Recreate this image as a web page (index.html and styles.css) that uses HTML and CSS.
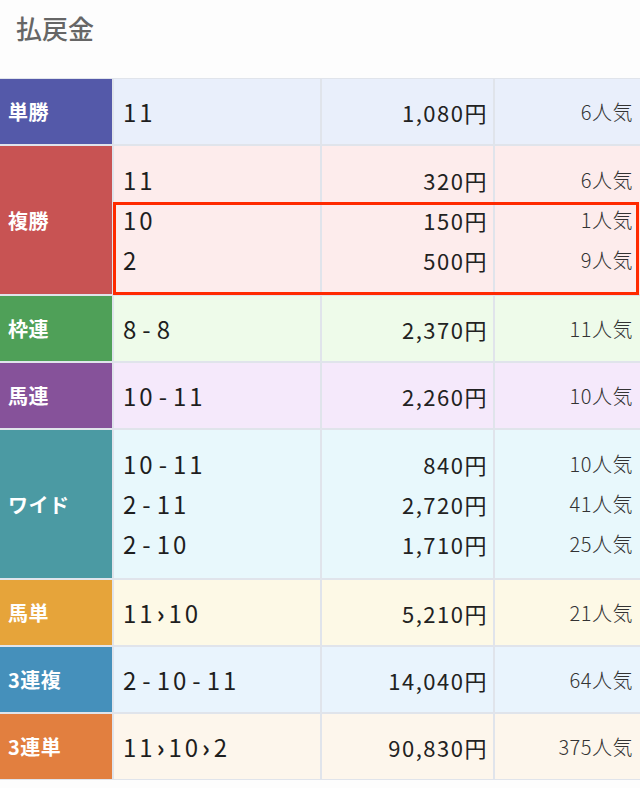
FILE: index.html
```html
<!DOCTYPE html>
<html lang="ja">
<head>
  <meta charset="UTF-8">
  <meta name="viewport" content="width=device-width, initial-scale=1.0">
  <title>払戻金</title>
  <link rel="stylesheet" href="styles.css">
</head>
<body>
<div class="payout">
  <div class="payout-header">
    <h2>払戻金</h2>
  </div>

  <div class="payout-table">
    <div class="row tansho">
      <div class="label">単勝</div>
      <div class="cell num"><span>11</span></div>
      <div class="cell yen"><span>1,080円</span></div>
      <div class="cell pop"><span>6人気</span></div>
    </div>

    <div class="row fukusho multi">
      <div class="label">複勝</div>
      <div class="cell num"><span>11</span><span>10</span><span>2</span></div>
      <div class="cell yen"><span>320円</span><span>150円</span><span>500円</span></div>
      <div class="cell pop"><span>6人気</span><span>1人気</span><span>9人気</span></div>
      <div class="hit-box"></div>
    </div>

    <div class="row wakuren">
      <div class="label">枠連</div>
      <div class="cell num"><span>8<i class="sep">-</i>8</span></div>
      <div class="cell yen"><span>2,370円</span></div>
      <div class="cell pop"><span>11人気</span></div>
    </div>

    <div class="row umaren">
      <div class="label">馬連</div>
      <div class="cell num"><span>10<i class="sep">-</i>11</span></div>
      <div class="cell yen"><span>2,260円</span></div>
      <div class="cell pop"><span>10人気</span></div>
    </div>

    <div class="row wide multi">
      <div class="label">ワイド</div>
      <div class="cell num">
        <span>10<i class="sep">-</i>11</span>
        <span>2<i class="sep">-</i>11</span>
        <span>2<i class="sep">-</i>10</span>
      </div>
      <div class="cell yen"><span>840円</span><span>2,720円</span><span>1,710円</span></div>
      <div class="cell pop"><span>10人気</span><span>41人気</span><span>25人気</span></div>
    </div>

    <div class="row umatan">
      <div class="label">馬単</div>
      <div class="cell num"><span>11<i class="arr">›</i>10</span></div>
      <div class="cell yen"><span>5,210円</span></div>
      <div class="cell pop"><span>21人気</span></div>
    </div>

    <div class="row sanrenpuku">
      <div class="label">3連複</div>
      <div class="cell num"><span>2<i class="sep">-</i>10<i class="sep">-</i>11</span></div>
      <div class="cell yen"><span>14,040円</span></div>
      <div class="cell pop"><span>64人気</span></div>
    </div>

    <div class="row sanrentan">
      <div class="label">3連単</div>
      <div class="cell num"><span>11<i class="arr">›</i>10<i class="arr">›</i>2</span></div>
      <div class="cell yen"><span>90,830円</span></div>
      <div class="cell pop"><span>375人気</span></div>
    </div>
  </div>
</div>
</body>
</html>
```

FILE: styles.css
```css
/* ベース */
* {
  margin: 0;
  padding: 0;
  box-sizing: border-box;
}

body {
  font-family: "Noto Sans CJK JP", "Noto Sans", sans-serif;
  background: #fdfdfd;
  color: #222;
  width: 640px;
}

/* 見出し */
.payout-header {
  height: 78px;
  padding: 11px 16px 0;
}

.payout-header h2 {
  font-size: 26px;
  font-weight: 500;
  color: #666;
  line-height: 34px;
}

/* テーブル */
.payout-table {
  display: flex;
  flex-direction: column;
  gap: 2px;
  background: #e0e4eb;
  padding: 1px 0 1px;
}

.row {
  display: grid;
  grid-template-columns: 112px 206px 171px 1fr;
  column-gap: 2px;
  height: 65px;
  position: relative;
}

.row.multi {
  height: 148px;
}

.label {
  display: flex;
  align-items: center;
  padding-left: 8px;
  color: #fff;
  font-size: 20px;
  font-weight: 700;
  letter-spacing: 0.5px;
}

.cell {
  display: flex;
  flex-direction: column;
  justify-content: center;
}

.cell span {
  display: block;
  line-height: 40px;
  white-space: nowrap;
}

.cell.num {
  padding-left: 9px;
  font-size: 24px;
  letter-spacing: 3px;
  color: #1e1e1e;
}

.cell.yen {
  text-align: right;
  padding-right: 5px;
  font-size: 22px;
  letter-spacing: 1.5px;
  color: #222;
}

.cell.pop {
  text-align: right;
  padding-right: 7px;
  font-size: 20px;
  letter-spacing: 0.5px;
  font-weight: 300;
  color: #333;
}

.sep {
  font-style: normal;
  margin: 0 3px;
}

.arr {
  font-style: normal;
  margin: 0 1px;
  font-weight: 700;
}

/* 的中枠 */
.hit-box {
  position: absolute;
  top: 56px;
  left: 113px;
  right: 1px;
  bottom: -1px;
  border: 3px solid #ff2a00;
}

/* 券種ごとの色 */
.tansho .label { background: #5459a9; }
.tansho .cell { background: #e9effb; }

.fukusho .label { background: #c85353; }
.fukusho .cell { background: #fdecec; }

.wakuren .label { background: #4fa058; }
.wakuren .cell { background: #eefbea; }

.umaren .label { background: #86529a; }
.umaren .cell { background: #f5e9fb; }

.wide .label { background: #4b9aa3; }
.wide .cell { background: #e8f8fc; }

.umatan .label { background: #e6a43a; }
.umatan .cell { background: #fdf9e6; }

.sanrenpuku .label { background: #4590bb; }
.sanrenpuku .cell { background: #e9f4fd; }

.sanrentan .label { background: #e27f3f; }
.sanrentan .cell { background: #fdf6ec; }
```
